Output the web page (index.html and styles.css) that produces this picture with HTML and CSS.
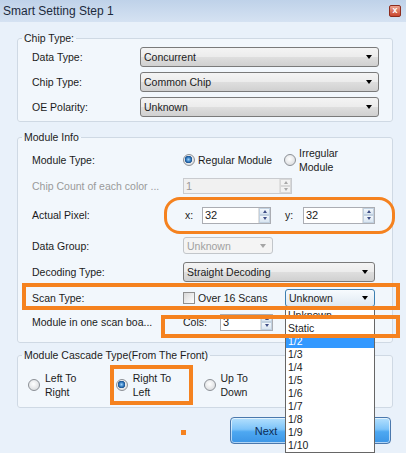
FILE: index.html
```html
<!DOCTYPE html>
<html lang="en">

<head>
    <meta charset="UTF-8">
    <meta name="viewport" content="width=device-width, initial-scale=1.0">
    <title>Smart Setting Step 1</title>
    <link rel="stylesheet" href="styles.css">
</head>

<body>
    <div class="window">
        <div class="titlebar">
            <span class="title">Smart Setting Step 1</span>
            <span class="close-btn">x</span>
        </div>

        <div class="content">
            <fieldset class="group chip-group">
                <legend>Chip Type:</legend>
                <div class="row">
                    <span class="label">Data Type:</span>
                    <div class="combo wide"><span>Concurrent</span><i class="arrow"></i></div>
                </div>
                <div class="row">
                    <span class="label">Chip Type:</span>
                    <div class="combo wide"><span>Common Chip</span><i class="arrow"></i></div>
                </div>
                <div class="row">
                    <span class="label">OE Polarity:</span>
                    <div class="combo wide"><span>Unknown</span><i class="arrow"></i></div>
                </div>
            </fieldset>

            <fieldset class="group module-group">
                <legend>Module Info</legend>
                <div class="row r-type">
                    <span class="label">Module Type:</span>
                    <div class="ctrl">
                        <div class="opt regular"><span class="radio checked"></span><span>Regular Module</span></div>
                        <div class="opt"><span class="radio"></span><span class="two-line">Irregular<br>Module</span></div>
                    </div>
                </div>
                <div class="row r-count">
                    <span class="label disabled">Chip Count of each color ...</span>
                    <div class="spin off count-spin">
                        <span class="spin-value">1</span>
                        <span class="spin-btns"><b class="up"></b><b class="down"></b></span>
                    </div>
                </div>
                <div class="row r-pixel">
                    <span class="label">Actual Pixel:</span>
                    <div class="ctrl">
                        <span class="axis x-axis">x:</span>
                        <div class="spin x-spin">
                            <span class="spin-value">32</span>
                            <span class="spin-btns"><b class="up"></b><b class="down"></b></span>
                        </div>
                        <span class="axis y-axis">y:</span>
                        <div class="spin y-spin">
                            <span class="spin-value">32</span>
                            <span class="spin-btns"><b class="up"></b><b class="down"></b></span>
                        </div>
                    </div>
                </div>
                <div class="row r-group">
                    <span class="label">Data Group:</span>
                    <div class="combo off short"><span>Unknown</span><i class="arrow"></i></div>
                </div>
                <div class="row r-decode">
                    <span class="label">Decoding Type:</span>
                    <div class="combo mid"><span>Straight Decoding</span><i class="arrow"></i></div>
                </div>
                <div class="row r-scan">
                    <span class="label">Scan Type:</span>
                    <div class="ctrl">
                        <div class="opt over"><span class="check"></span><span>Over 16 Scans</span></div>
                        <div class="combo focus scan-combo"><span>Unknown</span><i class="arrow"></i></div>
                    </div>
                </div>
                <div class="row r-cols">
                    <span class="label">Module in one scan boa...</span>
                    <div class="ctrl">
                        <span class="axis cols">Cols:</span>
                        <div class="spin cols-spin">
                            <span class="spin-value">3</span>
                            <span class="spin-btns"><b class="up"></b><b class="down"></b></span>
                        </div>
                    </div>
                </div>
            </fieldset>

            <fieldset class="group cascade-group">
                <legend>Module Cascade Type(From The Front)</legend>
                <div class="cascade-row">
                    <div class="opt col"><span class="radio"></span><span class="two-line">Left To<br>Right</span></div>
                    <div class="opt col"><span class="radio checked"></span><span class="two-line">Right To<br>Left</span></div>
                    <div class="opt col"><span class="radio"></span><span class="two-line">Up To<br>Down</span></div>
                    <div class="opt col"><span class="radio"></span><span class="two-line">Down To<br>Up</span></div>
                </div>
            </fieldset>

            <div class="footer">
                <button class="btn next">Next</button>
                <button class="btn cancel">Cancel</button>
            </div>
        </div>

        <!-- open list of the scan type combo -->
        <ul class="dropdown-list">
            <li>Unknown</li>
            <li>Static</li>
            <li class="selected">1/2</li>
            <li>1/3</li>
            <li>1/4</li>
            <li>1/5</li>
            <li>1/6</li>
            <li>1/7</li>
            <li>1/8</li>
            <li>1/9</li>
            <li>1/10</li>
        </ul>

        <!-- orange highlight marks drawn over the dialog -->
        <div class="mark mark-pixel"></div>
        <div class="mark mark-scan"></div>
        <div class="mark mark-cols"></div>
        <div class="mark mark-cascade"></div>
        <div class="mark-dot"></div>
    </div>
</body>

</html>
```

FILE: styles.css
```css
body {
    margin: 0;
    font-family: 'Liberation Sans', Arial, sans-serif;
    font-size: 10.5px;
    color: #1b1b1b;
}

.window {
    position: relative;
    width: 406px;
    height: 453px;
    background-color: #e9f1fa;
    overflow: hidden;
}

.titlebar {
    height: 22px;
    display: flex;
    align-items: center;
    justify-content: space-between;
    padding: 0 5px 0 3px;
    background: linear-gradient(#bfd2e9, #d5e2f2);
}

.title {
    font-size: 12px;
    color: #1c2a3c;
}

.close-btn {
    width: 12px;
    height: 12px;
    box-sizing: border-box;
    border: 1px solid #8d2c1d;
    border-radius: 2px;
    background: linear-gradient(#eba28f, #c9462e);
    color: #fff;
    font-size: 9px;
    font-weight: bold;
    line-height: 9px;
    text-align: center;
}

.content {
    padding: 10px 13px 0 17px;
}

/* group boxes */
.group {
    margin: 0;
    padding: 0 13px 2px 14px;
    border: 1px solid #cfd9e4;
    border-radius: 3px;
    background-color: #f2f7fc;
    min-width: 0;
}

.group legend {
    padding: 0 2px;
    margin-left: -10px;
    line-height: 12px;
}

.module-group {
    margin-top: 9px;
    padding-top: 2px;
    padding-bottom: 9px;
}

.cascade-group {
    margin-top: 6px;
    padding-top: 10px;
    padding-bottom: 8px;
}

.row {
    display: flex;
    align-items: center;
}

.label {
    flex-shrink: 0;
}

.chip-group .row {
    height: 25px;
}

.chip-group .label {
    width: 108px;
}

.module-group .label {
    width: 151px;
}

.label.disabled {
    color: #9a9a9a;
}

.r-type { height: 29px; }
.r-count { height: 24px; }
.r-pixel { height: 34px; }
.r-group { height: 27px; }
.r-decode { height: 26px; }
.r-scan { height: 26px; }
.r-cols { height: 22px; }

.ctrl {
    display: flex;
    align-items: center;
}

/* radios and check box */
.opt {
    display: flex;
    align-items: center;
    gap: 3px;
}

.opt.regular {
    width: 101px;
}

.opt.over {
    width: 102px;
}

.two-line {
    line-height: 14px;
}

.radio {
    width: 12px;
    height: 12px;
    flex-shrink: 0;
    box-sizing: border-box;
    border: 1px solid #8c9096;
    border-radius: 50%;
    background: radial-gradient(circle at 45% 40%, #ffffff, #d2d4d7);
}

.radio.checked {
    background:
        radial-gradient(circle at 45% 45%, #9ed3fb 0, #2b72b8 2.5px, #174f8c 3.5px, transparent 4px),
        radial-gradient(circle at 45% 40%, #ffffff, #d2d4d7);
}

.check {
    width: 12px;
    height: 12px;
    box-sizing: border-box;
    border: 1px solid #8f8f8f;
    background: linear-gradient(135deg, #d8d8d8, #ffffff);
}

/* combo boxes */
.combo {
    display: flex;
    align-items: center;
    justify-content: space-between;
    box-sizing: border-box;
    height: 20px;
    padding: 0 6px 0 3px;
    border: 1px solid #7a7a7a;
    border-radius: 3px;
    background: linear-gradient(#f4f4f4 0%, #ececec 48%, #dedede 52%, #d0d0d0 100%);
}

.arrow {
    width: 0;
    height: 0;
    border-left: 3.5px solid transparent;
    border-right: 3.5px solid transparent;
    border-top: 4px solid #000;
}

.combo.wide {
    width: 239px;
}

.combo.mid {
    width: 192px;
}

.combo.short {
    width: 90px;
    height: 17px;
}

.combo.off {
    color: #a0a0a0;
    border-color: #c2c6ca;
    background: #f4f4f4;
}

.combo.off .arrow {
    border-top-color: #a5a5a5;
}

.combo.focus {
    border-color: #3c7fb1;
    background: linear-gradient(#f7fbfe, #dfe9f2);
}

.scan-combo {
    width: 90px;
    height: 18px;
}

/* spin boxes */
.spin {
    display: flex;
    box-sizing: border-box;
    height: 17px;
    border: 1px solid #abadb3;
    background-color: #fff;
}

.spin-value {
    flex: 1;
    padding-left: 2px;
    line-height: 15px;
    font-size: 11px;
}

.spin-btns {
    width: 11px;
    display: flex;
    flex-direction: column;
    border-left: 1px solid #e0e0e0;
}

.spin-btns b {
    flex: 1;
    display: flex;
    align-items: center;
    justify-content: center;
    background: linear-gradient(#f4f8fc, #d9e5f1);
    border: 1px solid #c2d1e0;
}

.spin-btns b::after {
    content: '';
    border-left: 2.5px solid transparent;
    border-right: 2.5px solid transparent;
}

.spin-btns .up::after {
    border-bottom: 3px solid #3f4e86;
}

.spin-btns .down::after {
    border-top: 3px solid #3f4e86;
}

.spin.off {
    background-color: #f1f1f1;
    border-color: #c9cbcf;
    color: #9a9a9a;
}

.spin.off .spin-btns b {
    background: #f2f2f2;
    border-color: #d8d8d8;
}

.spin.off .spin-btns .up::after {
    border-bottom-color: #a8a8a8;
}

.spin.off .spin-btns .down::after {
    border-top-color: #a8a8a8;
}

.count-spin {
    width: 109px;
    height: 16px;
}

.axis {
    flex-shrink: 0;
}

.x-axis {
    width: 17px;
    padding-left: 2px;
}

.y-axis {
    width: 18px;
    padding-left: 14px;
}

.cols {
    width: 37px;
}

.x-spin {
    width: 69px;
}

.y-spin {
    width: 72px;
}

.cols-spin {
    width: 53px;
}

/* cascade options */
.cascade-row {
    display: flex;
    margin-left: -4px;
    height: 28px;
}

.opt.col {
    width: 97px;
    gap: 5px;
}

/* buttons */
.footer {
    display: flex;
    justify-content: flex-end;
    gap: 4px;
    margin: 9px 2px 0 0;
}

.btn {
    height: 27px;
    padding: 0;
    font-family: inherit;
    font-size: 11px;
    color: #0d2c55;
    border: 1px solid #4a78ad;
    border-radius: 4px;
    background: linear-gradient(#b4e0fd 0%, #7cc3f9 45%, #4ea8f1 55%, #3b95e6 100%);
    box-shadow: inset 0 0 0 1px rgba(255, 255, 255, 0.6);
}

.btn.next {
    width: 72px;
}

.btn.cancel {
    width: 85px;
}

/* open drop-down list */
.dropdown-list {
    position: absolute;
    left: 285px;
    top: 308px;
    width: 90px;
    box-sizing: border-box;
    margin: 0;
    padding: 0;
    list-style: none;
    border: 1px solid #666;
    background-color: #fff;
}

.dropdown-list li {
    height: 13px;
    line-height: 13px;
    padding-left: 2px;
}

.dropdown-list li.selected {
    background-color: #3399ff;
    color: #fff;
}

/* annotation marks */
.mark {
    position: absolute;
    box-sizing: border-box;
    border: 4px solid #f5821f;
}

.mark-pixel {
    left: 164px;
    top: 197px;
    width: 231px;
    height: 37px;
    border-width: 3px;
    border-radius: 16px;
}

.mark-scan {
    left: 22px;
    top: 283px;
    width: 378px;
    height: 27px;
}

.mark-cols {
    left: 161px;
    top: 315px;
    width: 239px;
    height: 23px;
}

.mark-cascade {
    left: 110px;
    top: 365px;
    width: 83px;
    height: 40px;
}

.mark-dot {
    position: absolute;
    left: 181px;
    top: 430px;
    width: 5px;
    height: 5px;
    background-color: #f5821f;
}
```
